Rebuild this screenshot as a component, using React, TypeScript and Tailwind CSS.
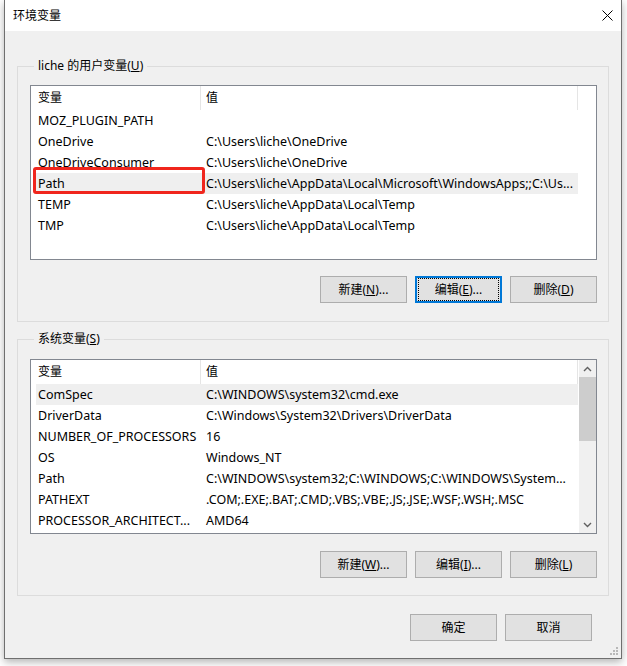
import React from 'react';

type Row = { name: string; value: string; selected?: boolean; marked?: boolean };

const userVars: Row[] = [
  { name: 'MOZ_PLUGIN_PATH', value: '' },
  { name: 'OneDrive', value: 'C:\\Users\\liche\\OneDrive' },
  { name: 'OneDriveConsumer', value: 'C:\\Users\\liche\\OneDrive' },
  { name: 'Path', value: 'C:\\Users\\liche\\AppData\\Local\\Microsoft\\WindowsApps;;C:\\Us...', selected: true, marked: true },
  { name: 'TEMP', value: 'C:\\Users\\liche\\AppData\\Local\\Temp' },
  { name: 'TMP', value: 'C:\\Users\\liche\\AppData\\Local\\Temp' },
];

const systemVars: Row[] = [
  { name: 'ComSpec', value: 'C:\\WINDOWS\\system32\\cmd.exe', selected: true },
  { name: 'DriverData', value: 'C:\\Windows\\System32\\Drivers\\DriverData' },
  { name: 'NUMBER_OF_PROCESSORS', value: '16' },
  { name: 'OS', value: 'Windows_NT' },
  { name: 'Path', value: 'C:\\WINDOWS\\system32;C:\\WINDOWS;C:\\WINDOWS\\System...' },
  { name: 'PATHEXT', value: '.COM;.EXE;.BAT;.CMD;.VBS;.VBE;.JS;.JSE;.WSF;.WSH;.MSC' },
  { name: 'PROCESSOR_ARCHITECT...', value: 'AMD64' },
];

const Btn: React.FC<{ children: React.ReactNode; focused?: boolean }> = ({ children, focused }) => (
  <button
    className={`w-[87px] h-[27px] bg-[#e1e1e1] text-[12px] leading-none flex items-center justify-center ${
      focused ? 'border-2 border-[#0078d7]' : 'border border-[#adadad]'
    }`}
  >
    {focused ? (
      <span className="w-full h-full flex items-center justify-center border border-dotted border-black m-[1px]">
        {children}
      </span>
    ) : (
      children
    )}
  </button>
);

const VarList: React.FC<{ rows: Row[]; scroll?: boolean; className?: string }> = ({ rows, scroll, className }) => (
  <div className={`relative h-[175px] border border-[#828790] bg-white flex ${className ?? ''}`}>
    <div className="w-[547px] flex flex-col">
      {/* header */}
      <div className="h-[24px] flex text-[12px]">
        <div className="w-[170px] pl-[7px] flex items-center border-r border-[#e5e5e5]">变量</div>
        <div className="w-[377px] pl-[5px] flex items-center border-r border-[#e5e5e5]">值</div>
      </div>
      {rows.map((r) => (
        <div
          key={r.name}
          className={`h-[21px] pt-[2px] ml-[5px] w-[542px] flex items-center text-[12.5px] whitespace-nowrap ${
            r.selected ? 'bg-[#efefef]' : ''
          }`}
        >
          <div className="w-[164px] pl-[2px] overflow-hidden">{r.name}</div>
          <div className="flex-1 pl-[6px] overflow-hidden">{r.value}</div>
        </div>
      ))}
    </div>
    {scroll && (
      <div className="w-[17px] ml-auto bg-[#f0f0f0] flex flex-col">
        <div className="h-[17px] flex items-center justify-center">
          <svg width="9" height="6" viewBox="0 0 9 6">
            <path d="M1 5 L4.5 1.5 L8 5" stroke="#606060" strokeWidth="1.4" fill="none" />
          </svg>
        </div>
        <div className="h-[64px] bg-[#cdcdcd]" />
        <div className="flex-1" />
        <div className="h-[17px] flex items-center justify-center">
          <svg width="9" height="6" viewBox="0 0 9 6">
            <path d="M1 1 L4.5 4.5 L8 1" stroke="#606060" strokeWidth="1.4" fill="none" />
          </svg>
        </div>
      </div>
    )}
    {rows.some((r) => r.marked) && (
      <div className="absolute left-[2px] top-[81px] w-[172px] h-[27px] border-[3px] border-[#f0261d] rounded-[3px]" />
    )}
  </div>
);

const Group: React.FC<{
  label: React.ReactNode;
  children: React.ReactNode;
  className?: string;
}> = ({ label, children, className }) => (
  <fieldset className={`border border-[#dcdcdc] pl-[12px] pr-[11px] ${className ?? ''}`}>
    <legend className="ml-[4px] px-[4px] text-[12px] leading-[16px]">{label}</legend>
    {children}
  </fieldset>
);

export default function App() {
  return (
    <div className="w-[627px] h-[666px] bg-white font-['Noto_Sans','Noto_Sans_CJK_SC',sans-serif] text-black">
      <div className="relative ml-[4px] w-[618px] h-[659px] border-x border-b border-[#6f6f6f] bg-[#f0f0f0] flex flex-col shadow-[0_3px_8px_rgba(0,0,0,0.3)]">
        {/* Title bar */}
        <div className="h-[31px] bg-white flex items-center pl-[8px] pr-[8px]">
          <span className="text-[12px]">环境变量</span>
          <svg className="ml-auto" width="11" height="11" viewBox="0 0 11 11">
            <path d="M0.5 0.5 L10.5 10.5 M10.5 0.5 L0.5 10.5" stroke="#000" strokeWidth="1" />
          </svg>
        </div>

        <div className="flex-1 px-[12px] pt-[27px] flex flex-col">
          <Group
            className="pb-[18px]"
            label={
              <>
                liche 的用户变量(<u>U</u>)
              </>
            }
          >
            <VarList rows={userVars} className="mt-[11px]" />
            <div className="mt-[16px] flex justify-end gap-[8px]">
              <Btn>
                新建(<u>N</u>)...
              </Btn>
              <Btn focused>
                编辑(<u>E</u>)...
              </Btn>
              <Btn>
                删除(<u>D</u>)
              </Btn>
            </div>
          </Group>

          <Group
            className="mt-[9px] pb-[17px]"
            label={
              <>
                系统变量(<u>S</u>)
              </>
            }
          >
            <VarList rows={systemVars} scroll className="mt-[12px]" />
            <div className="mt-[17px] flex justify-end gap-[8px]">
              <Btn>
                新建(<u>W</u>)...
              </Btn>
              <Btn>
                编辑(<u>I</u>)...
              </Btn>
              <Btn>
                删除(<u>L</u>)
              </Btn>
            </div>
          </Group>

          <div className="mt-[18px] mr-[17px] flex justify-end gap-[8px]">
            <Btn>确定</Btn>
            <Btn>取消</Btn>
          </div>
        </div>

        {/* resize grip */}
        <svg className="absolute right-[2px] bottom-[2px]" width="10" height="10" viewBox="0 0 10 10">
          <rect x="7" y="1" width="2" height="2" fill="#b8b8b8" />
          <rect x="4" y="4" width="2" height="2" fill="#b8b8b8" />
          <rect x="7" y="4" width="2" height="2" fill="#b8b8b8" />
          <rect x="1" y="7" width="2" height="2" fill="#b8b8b8" />
          <rect x="4" y="7" width="2" height="2" fill="#b8b8b8" />
          <rect x="7" y="7" width="2" height="2" fill="#b8b8b8" />
        </svg>
      </div>
    </div>
  );
}
